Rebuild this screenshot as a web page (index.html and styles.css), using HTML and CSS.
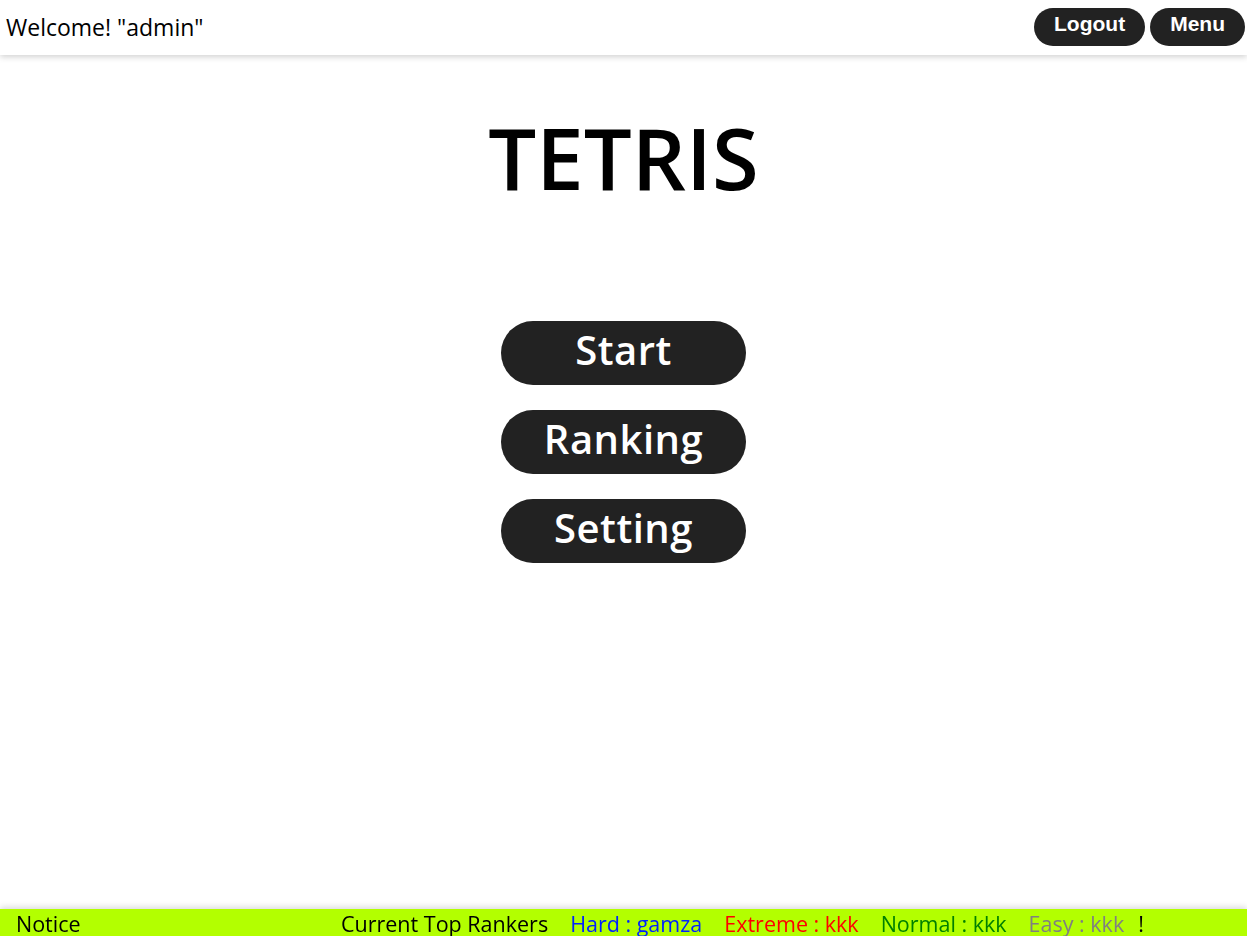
FILE: index.html
```html
<!DOCTYPE html>
<html>
<head>
<meta charset="utf-8">
<link rel="stylesheet" href="styles.css">
</head>
<body>
<header class="topbar">
  <div class="welcome">Welcome! "admin"</div>
  <div class="top-actions">
    <button class="pill">Logout</button>
    <button class="pill">Menu</button>
  </div>
</header>
<main class="main">
  <h1 class="title">TETRIS</h1>
  <nav class="menu">
    <button class="big">Start</button>
    <button class="big">Ranking</button>
    <button class="big">Setting</button>
  </nav>
</main>
<footer class="notice">
  <span class="notice-label">Notice</span>
  <div class="rankers">
    <span class="r-title">Current Top Rankers</span>
    <span class="hard">Hard : gamza</span>
    <span class="extreme">Extreme : kkk</span>
    <span class="normal">Normal : kkk</span>
    <span class="easy">Easy : kkk</span>
    <span class="bang">!</span>
  </div>
</footer>
</body>
</html>
```
FILE: styles.css
```css
html, body {
  margin: 0;
  padding: 0;
  height: 100%;
  overflow: hidden;
  background: #fff;
  font-family: "Open Sans", "Noto Sans", sans-serif;
  color: #000;
}
.topbar {
  height: 55px;
  display: flex;
  align-items: flex-start;
  justify-content: space-between;
  box-shadow: 0 2px 6px rgba(0,0,0,0.18);
  position: relative;
  z-index: 1;
}
.welcome {
  padding: 13px 0 0 6px;
  font-size: 23px;
  line-height: 28px;
}
.top-actions {
  display: flex;
  gap: 5px;
  padding: 8px 2px 0 0;
}
.pill {
  height: 38px;
  border: none;
  border-radius: 19px;
  background: #222;
  color: #fff;
  font-family: "Liberation Sans", Arial, sans-serif;
  font-weight: bold;
  font-size: 21px;
  padding: 0 20px 6px 20px;
  line-height: 30px;
}
.main {
  display: flex;
  flex-direction: column;
  align-items: center;
}
.title {
  margin: 52px 0 0 0;
  font-size: 85px;
  font-weight: 600;
  line-height: 100px;
}
.menu {
  margin-top: 114px;
  display: flex;
  flex-direction: column;
  gap: 25px;
}
.big {
  width: 245px;
  height: 64px;
  border: none;
  border-radius: 32px;
  background: #222;
  color: #fff;
  font-family: "Open Sans", "Noto Sans", sans-serif;
  font-weight: 600;
  font-size: 40px;
  line-height: 56px;
  letter-spacing: 0.5px;
  padding: 0 0 6px 0;
}
.notice {
  position: fixed;
  left: 0;
  right: 0;
  top: 909px;
  height: 40px;
  background: #b3ff00;
  box-shadow: 0 -2px 6px rgba(0,0,0,0.15);
  display: flex;
  font-size: 21.5px;
  line-height: 30px;
}
.notice-label {
  padding-left: 16px;
  width: 325px;
}
.rankers {
  display: flex;
  gap: 22px;
}
.hard { color: #0022ff; }
.extreme { color: #ff0000; }
.normal { color: #008000; }
.easy { color: #808080; }
.bang { margin-left: -8px; }
```
